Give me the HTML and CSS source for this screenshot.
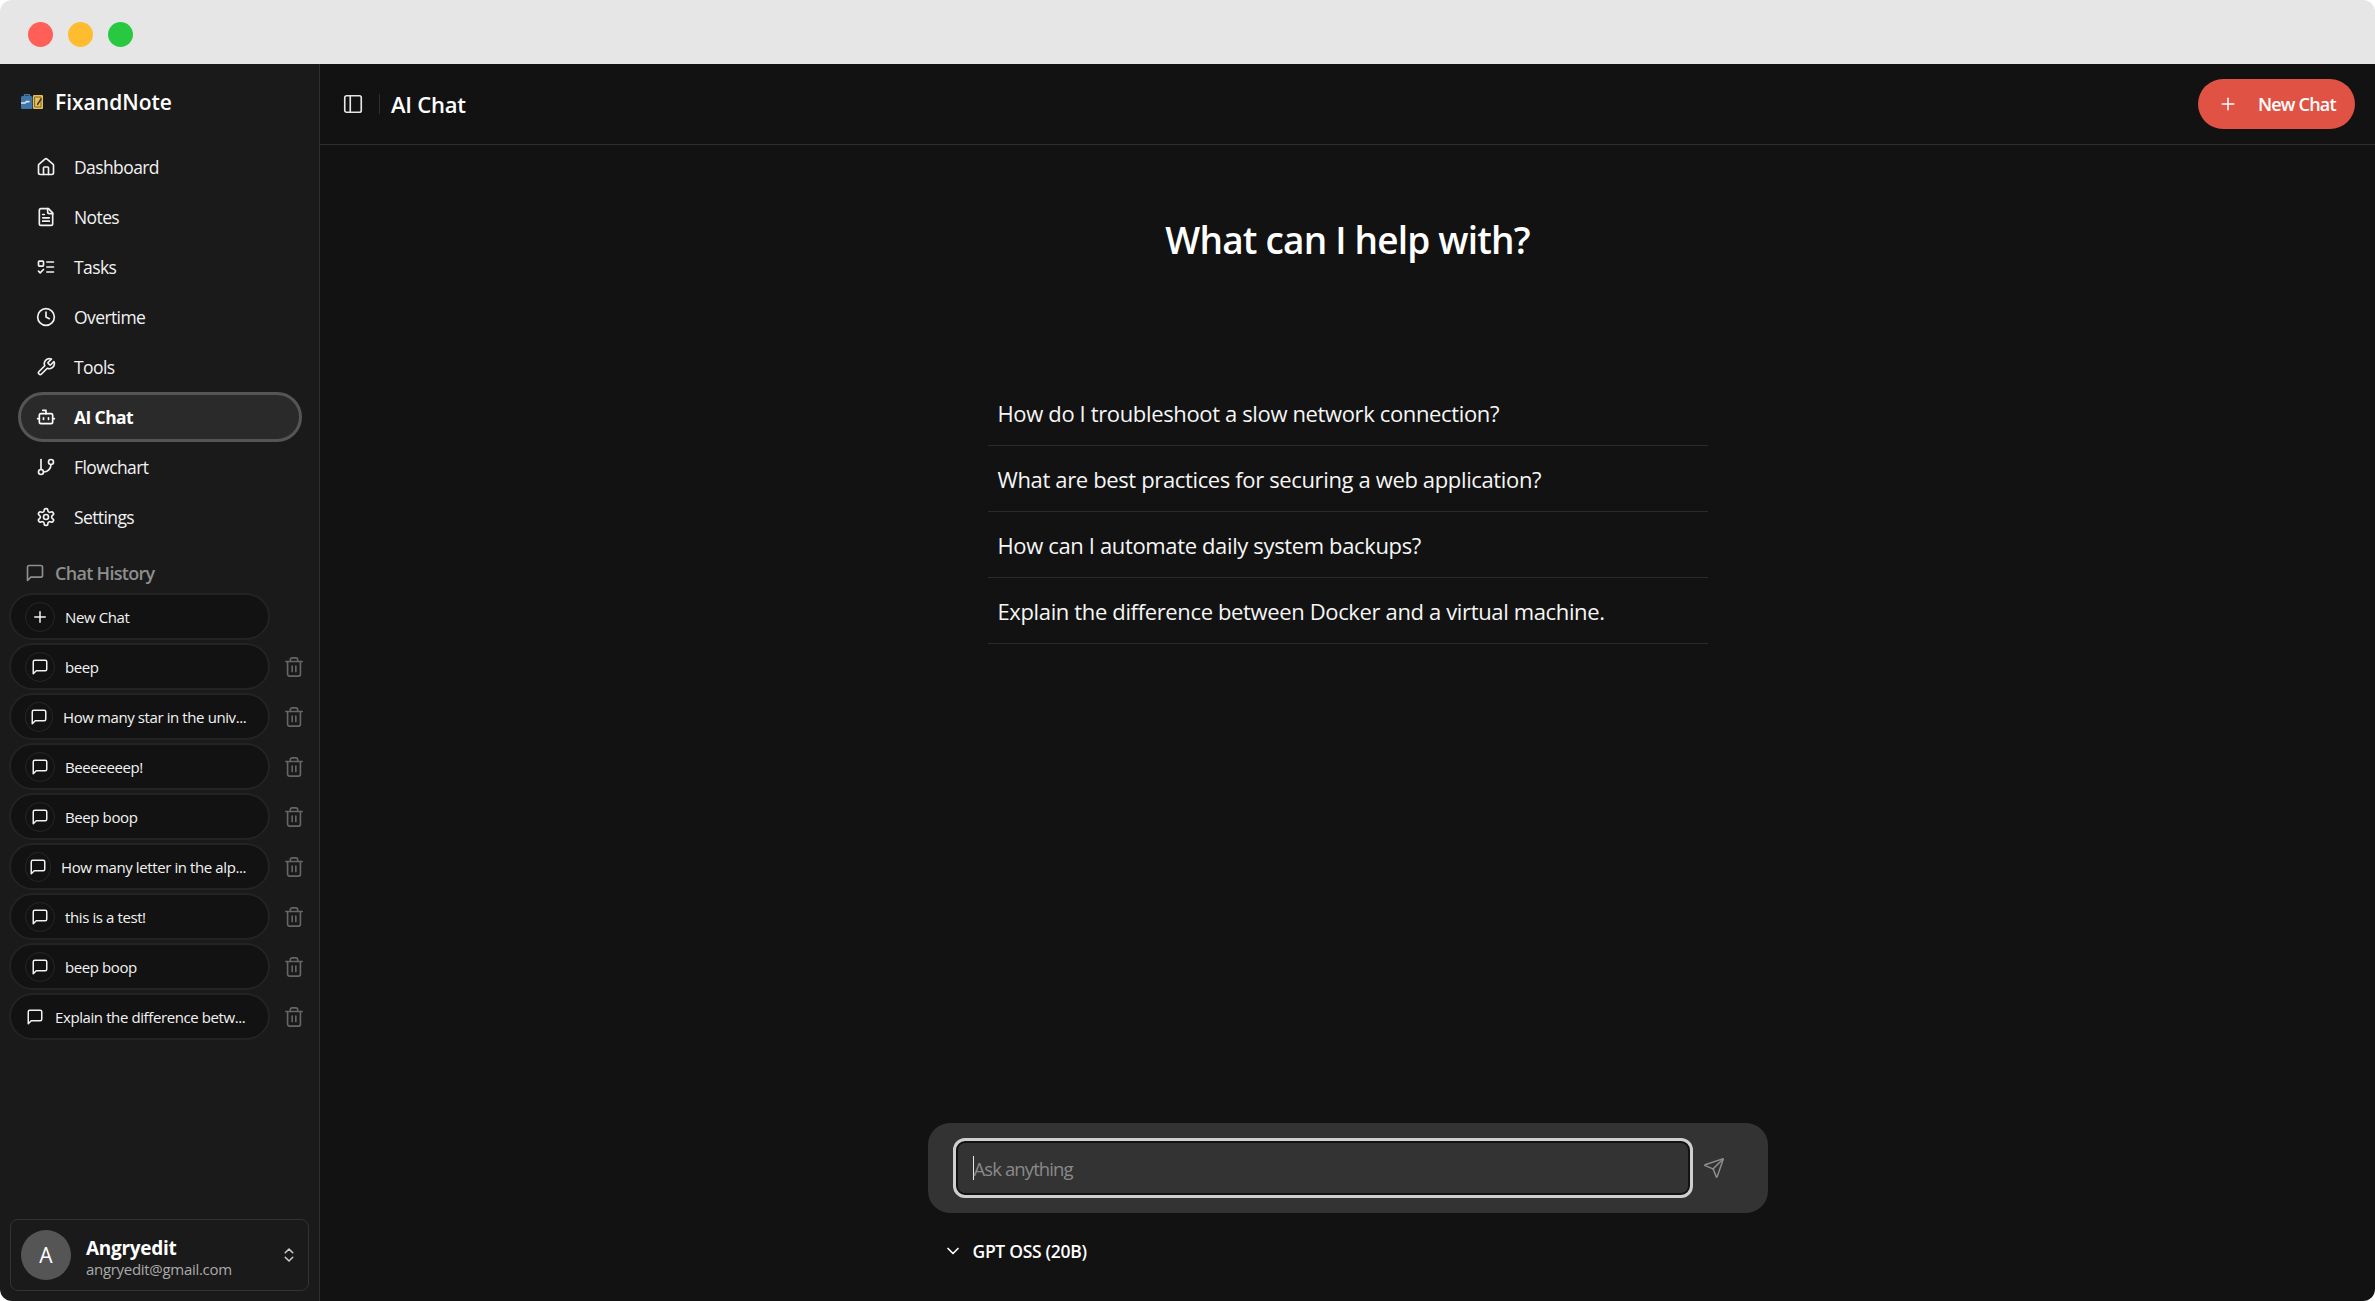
FILE: index.html
```html
<!DOCTYPE html>
<html lang="en">
<head>
<meta charset="utf-8">
<title>FixandNote - AI Chat</title>
<link rel="stylesheet" href="styles.css">
</head>
<body>
<svg class="sprite" aria-hidden="true">
  <symbol id="i-home" viewBox="0 0 24 24"><path d="M15 21v-8a1 1 0 0 0-1-1h-4a1 1 0 0 0-1 1v8"/><path d="M3 10a2 2 0 0 1 .709-1.528l7-5.999a2 2 0 0 1 2.582 0l7 5.999A2 2 0 0 1 21 10v9a2 2 0 0 1-2 2H5a2 2 0 0 1-2-2z"/></symbol>
  <symbol id="i-file" viewBox="0 0 24 24"><path d="M15 2H6a2 2 0 0 0-2 2v16a2 2 0 0 0 2 2h12a2 2 0 0 0 2-2V7Z"/><path d="M14 2v4a2 2 0 0 0 2 2h4"/><path d="M10 9H8"/><path d="M16 13H8"/><path d="M16 17H8"/></symbol>
  <symbol id="i-tasks" viewBox="0 0 24 24"><rect x="3" y="5" width="6" height="6" rx="1"/><path d="m3 17 2 2 4-4"/><path d="M13 6h8"/><path d="M13 12h8"/><path d="M13 18h8"/></symbol>
  <symbol id="i-clock" viewBox="0 0 24 24"><circle cx="12" cy="12" r="10"/><path d="M12 6v6l4 2"/></symbol>
  <symbol id="i-wrench" viewBox="0 0 24 24"><path d="M14.7 6.3a1 1 0 0 0 0 1.4l1.6 1.6a1 1 0 0 0 1.4 0l3.77-3.77a6 6 0 0 1-7.94 7.94l-6.91 6.91a2.12 2.12 0 0 1-3-3l6.91-6.91a6 6 0 0 1 7.94-7.94l-3.76 3.76z"/></symbol>
  <symbol id="i-bot" viewBox="0 0 24 24"><path d="M12 8V4H8"/><rect width="16" height="12" x="4" y="8" rx="2"/><path d="M2 14h2"/><path d="M20 14h2"/><path d="M15 13v2"/><path d="M9 13v2"/></symbol>
  <symbol id="i-branch" viewBox="0 0 24 24"><path d="M6 3v12"/><circle cx="18" cy="6" r="3"/><circle cx="6" cy="18" r="3"/><path d="M18 9a9 9 0 0 1-9 9"/></symbol>
  <symbol id="i-gear" viewBox="0 0 24 24"><path d="M12.22 2h-.44a2 2 0 0 0-2 2v.18a2 2 0 0 1-1 1.73l-.43.25a2 2 0 0 1-2 0l-.15-.08a2 2 0 0 0-2.73.73l-.22.38a2 2 0 0 0 .73 2.73l.15.1a2 2 0 0 1 1 1.72v.51a2 2 0 0 1-1 1.74l-.15.09a2 2 0 0 0-.73 2.73l.22.38a2 2 0 0 0 2.73.73l.15-.08a2 2 0 0 1 2 0l.43.25a2 2 0 0 1 1 1.73V20a2 2 0 0 0 2 2h.44a2 2 0 0 0 2-2v-.18a2 2 0 0 1 1-1.73l.43-.25a2 2 0 0 1 2 0l.15.08a2 2 0 0 0 2.73-.73l.22-.39a2 2 0 0 0-.73-2.73l-.15-.08a2 2 0 0 1-1-1.74v-.5a2 2 0 0 1 1-1.74l.15-.09a2 2 0 0 0 .73-2.73l-.22-.38a2 2 0 0 0-2.73-.73l-.15.08a2 2 0 0 1-2 0l-.43-.25a2 2 0 0 1-1-1.73V4a2 2 0 0 0-2-2z"/><circle cx="12" cy="12" r="3"/></symbol>
  <symbol id="i-msg" viewBox="0 0 24 24"><path d="M21 15a2 2 0 0 1-2 2H7l-4 4V5a2 2 0 0 1 2-2h14a2 2 0 0 1 2 2z"/></symbol>
  <symbol id="i-plus" viewBox="0 0 24 24"><path d="M5 12h14"/><path d="M12 5v14"/></symbol>
  <symbol id="i-trash" viewBox="0 0 24 24"><path d="M3 6h18"/><path d="M19 6v14c0 1-1 2-2 2H7c-1 0-2-1-2-2V6"/><path d="M8 6V4c0-1 1-2 2-2h4c1 0 2 1 2 2v2"/><path d="M10 11v6"/><path d="M14 11v6"/></symbol>
  <symbol id="i-updown" viewBox="0 0 24 24"><path d="m7 15 5 5 5-5"/><path d="m7 9 5-5 5 5"/></symbol>
  <symbol id="i-panel" viewBox="0 0 24 24"><rect width="18" height="18" x="3" y="3" rx="2"/><path d="M9 3v18"/></symbol>
  <symbol id="i-send" viewBox="0 0 24 24"><path d="M14.536 21.686a.5.5 0 0 0 .937-.024l6.5-19a.496.496 0 0 0-.635-.635l-19 6.5a.5.5 0 0 0-.024.937l7.93 3.18a2 2 0 0 1 1.112 1.11z"/><path d="m21.854 2.147-10.94 10.939"/></symbol>
  <symbol id="i-down" viewBox="0 0 24 24"><path d="m6 9 6 6 6-6"/></symbol>
</svg>

<div class="window">
  <div class="titlebar">
    <span class="dot dot-red"></span>
    <span class="dot dot-yellow"></span>
    <span class="dot dot-green"></span>
  </div>
  <div class="app">
    <aside class="sidebar">
      <div class="brand">
        <svg class="logo" viewBox="0 0 22 16" aria-hidden="true">
          <rect x="0" y="2" width="11.5" height="13" rx="1.5" fill="#3f76a8"/>
          <path d="M3.5 2V.8h5V2" fill="none" stroke="#3f76a8" stroke-width="1.4"/>
          <path d="M0.5 9h3.5l1.4-1.4h2.6" fill="none" stroke="#dfe6ee" stroke-width="1.6"/>
          <rect x="12" y="1" width="10" height="14" rx="1" fill="#e8bf55"/>
          <rect x="14" y="3" width="6" height="10" fill="none" stroke="#7a6426" stroke-width="1"/>
          <path d="M20 5l-3.5 5.5" stroke="#3d3413" stroke-width="1.4"/>
        </svg>
        <span class="brand-name">FixandNote</span>
      </div>
      <nav class="nav">
        <a class="nav-link"><svg class="icon"><use href="#i-home"/></svg><span>Dashboard</span></a>
        <a class="nav-link"><svg class="icon"><use href="#i-file"/></svg><span>Notes</span></a>
        <a class="nav-link"><svg class="icon"><use href="#i-tasks"/></svg><span>Tasks</span></a>
        <a class="nav-link"><svg class="icon"><use href="#i-clock"/></svg><span>Overtime</span></a>
        <a class="nav-link"><svg class="icon"><use href="#i-wrench"/></svg><span>Tools</span></a>
        <a class="nav-link is-active"><svg class="icon"><use href="#i-bot"/></svg><span>AI Chat</span></a>
        <a class="nav-link"><svg class="icon"><use href="#i-branch"/></svg><span>Flowchart</span></a>
        <a class="nav-link"><svg class="icon"><use href="#i-gear"/></svg><span>Settings</span></a>
      </nav>
      <div class="history-label"><svg class="icon"><use href="#i-msg"/></svg><span>Chat History</span></div>
      <ul class="history">
        <li class="history-row"><div class="chat-pill"><span class="chat-icon"><svg class="icon-sm"><use href="#i-plus"/></svg></span><span class="chat-text">New Chat</span></div></li>
        <li class="history-row"><div class="chat-pill"><span class="chat-icon"><svg class="icon-sm"><use href="#i-msg"/></svg></span><span class="chat-text">beep</span></div><svg class="trash"><use href="#i-trash"/></svg></li>
        <li class="history-row"><div class="chat-pill"><span class="chat-icon squeeze-1"><svg class="icon-sm"><use href="#i-msg"/></svg></span><span class="chat-text">How many star in the univ...</span></div><svg class="trash"><use href="#i-trash"/></svg></li>
        <li class="history-row"><div class="chat-pill"><span class="chat-icon"><svg class="icon-sm"><use href="#i-msg"/></svg></span><span class="chat-text">Beeeeeeep!</span></div><svg class="trash"><use href="#i-trash"/></svg></li>
        <li class="history-row"><div class="chat-pill"><span class="chat-icon"><svg class="icon-sm"><use href="#i-msg"/></svg></span><span class="chat-text">Beep boop</span></div><svg class="trash"><use href="#i-trash"/></svg></li>
        <li class="history-row"><div class="chat-pill"><span class="chat-icon squeeze-2"><svg class="icon-sm"><use href="#i-msg"/></svg></span><span class="chat-text">How many letter in the alp...</span></div><svg class="trash"><use href="#i-trash"/></svg></li>
        <li class="history-row"><div class="chat-pill"><span class="chat-icon"><svg class="icon-sm"><use href="#i-msg"/></svg></span><span class="chat-text">this is a test!</span></div><svg class="trash"><use href="#i-trash"/></svg></li>
        <li class="history-row"><div class="chat-pill"><span class="chat-icon"><svg class="icon-sm"><use href="#i-msg"/></svg></span><span class="chat-text">beep boop</span></div><svg class="trash"><use href="#i-trash"/></svg></li>
        <li class="history-row"><div class="chat-pill"><span class="chat-icon squeeze-3"><svg class="icon-sm"><use href="#i-msg"/></svg></span><span class="chat-text">Explain the difference betw...</span></div><svg class="trash"><use href="#i-trash"/></svg></li>
      </ul>
      <div class="account">
        <span class="avatar">A</span>
        <div class="account-info">
          <div class="account-name">Angryedit</div>
          <div class="account-mail">angryedit@gmail.com</div>
        </div>
        <svg class="updown"><use href="#i-updown"/></svg>
      </div>
    </aside>
    <main class="main">
      <header class="topbar">
        <svg class="panel-icon"><use href="#i-panel"/></svg>
        <span class="topbar-sep"></span>
        <h1 class="topbar-title">AI Chat</h1>
        <button class="new-chat"><svg class="new-chat-icon"><use href="#i-plus"/></svg><span>New Chat</span></button>
      </header>
      <section class="welcome">
        <h2 class="welcome-title">What can I help with?</h2>
        <ul class="suggestions">
          <li class="suggestion">How do I troubleshoot a slow network connection?</li>
          <li class="suggestion">What are best practices for securing a web application?</li>
          <li class="suggestion">How can I automate daily system backups?</li>
          <li class="suggestion">Explain the difference between Docker and a virtual machine.</li>
        </ul>
      </section>
      <section class="composer">
        <div class="composer-panel">
          <div class="composer-input"><span class="caret"></span><span class="placeholder">Ask anything</span></div>
          <svg class="send"><use href="#i-send"/></svg>
        </div>
        <div class="model"><svg class="model-chevron"><use href="#i-down"/></svg><span>GPT OSS (20B)</span></div>
      </section>
    </main>
  </div>
</div>
</body>
</html>
```

FILE: styles.css
```css
* { box-sizing: border-box; }
html, body { margin: 0; height: 100%; }
body {
  background: #fff;
  font-family: "Open Sans", "Noto Sans", sans-serif;
  color: #fff;
  overflow: hidden;
}
.sprite { display: none; }
svg { fill: none; stroke: currentColor; stroke-linecap: round; stroke-linejoin: round; stroke-width: 2; display: block; flex: none; }

.window { height: 1301px; display: flex; flex-direction: column; border-radius: 12px; overflow: hidden; }
.titlebar { height: 64px; background: #e6e6e6; display: flex; align-items: center; gap: 15px; padding: 4px 0 0 28px; flex: none; }
.dot { width: 25px; height: 25px; border-radius: 50%; }
.dot-red { background: #ff5f57; }
.dot-yellow { background: #febc2e; }
.dot-green { background: #28c840; }

.app { flex: 1; display: flex; min-height: 0; }

/* sidebar */
.sidebar { width: 320px; background: #1a1a1a; border-right: 1px solid #2e2e2e; display: flex; flex-direction: column; flex: none; }
.brand { height: 78px; display: flex; align-items: center; gap: 12px; padding: 0 0 2px 21px; }
.logo { width: 22px; height: 16px; stroke: none; }
.brand-name { font-size: 21px; font-weight: 600; letter-spacing: 0; }
.nav { display: flex; flex-direction: column; padding: 0 17px 0 18px; }
.nav-link { height: 50px; display: flex; align-items: center; gap: 18px; padding-left: 16px; font-size: 17.5px; letter-spacing: -0.6px; border-radius: 25px; border: 2px solid transparent; color: #f2f2f2; }
.icon { width: 20px; height: 20px; stroke-width: 2; }
.is-active { background: #2a2a2a; border: 3px solid #555; padding-left: 15px; font-weight: 700; color: #fff; }
.history-label { display: flex; align-items: center; gap: 10px; padding: 0 0 0 25px; margin-top: 15px; height: 32px; font-size: 18px; font-weight: 600; letter-spacing: -0.7px; color: #8e8e8e; }
.history-label .icon { width: 20px; height: 20px; }
.history { list-style: none; margin: 4px 0 0; padding: 0 0 0 9px; display: flex; flex-direction: column; gap: 3px; }
.history-row { display: flex; align-items: center; height: 47px; gap: 13px; }
.chat-pill { width: 261px; height: 47px; flex: none; display: flex; align-items: center; gap: 10px; padding-left: 14px; background: #121212; border: 2px solid #232323; border-radius: 24px; font-size: 15px; letter-spacing: -0.4px; color: #f2f2f2; }
.chat-icon { width: 30px; height: 30px; flex: none; display: flex; align-items: center; justify-content: center; border-radius: 50%; border: 1px solid #262626; }
.squeeze-1 { width: 28px; }
.squeeze-2 { width: 26px; }
.squeeze-3 { width: 20px; border-color: transparent; }
.icon-sm { width: 18px; height: 18px; stroke-width: 2; }
.chat-text { white-space: nowrap; }
.trash { width: 22px; height: 22px; color: #666; stroke-width: 1.8; }

.account { margin: auto 10px 10px; height: 72px; border: 1px solid #333; border-radius: 8px; display: flex; align-items: center; gap: 15px; padding: 0 10px; }
.avatar { width: 50px; height: 50px; border-radius: 50%; background: #555; display: flex; align-items: center; justify-content: center; font-size: 21px; flex: none; }
.account-info { flex: 1; min-width: 0; padding-top: 3px; }
.account-name { font-size: 19px; font-weight: 700; line-height: 24px; letter-spacing: -0.3px; }
.account-mail { font-size: 15px; line-height: 18px; color: #aaa; letter-spacing: -0.3px; }
.updown { width: 18px; height: 18px; color: #ccc; stroke-width: 2; }

/* main */
.main { flex: 1; background: #121212; display: flex; flex-direction: column; min-width: 0; }
.topbar { height: 81px; border-bottom: 1px solid #2e2e2e; display: flex; align-items: center; padding: 0 20px 0 22px; flex: none; }
.panel-icon { width: 22px; height: 22px; color: #e6e6e6; stroke-width: 1.8; }
.topbar-sep { width: 1px; height: 20px; background: #2e2e2e; margin: 0 11px 0 15px; }
.topbar-title { margin: 0; font-size: 22px; font-weight: 600; letter-spacing: -0.25px; flex: 1; }
.new-chat { width: 157px; height: 50px; border: 0; border-radius: 25px; background: #e05243; color: #fff; font: 600 18px "Open Sans", sans-serif; letter-spacing: -0.8px; display: flex; align-items: center; padding: 0 0 0 20px; gap: 20px; }
.new-chat-icon { width: 20px; height: 20px; stroke-width: 1.8; }

.welcome { flex: 1; display: flex; flex-direction: column; align-items: center; }
.welcome-title { margin: 65px 0 0; font-size: 37px; line-height: 60px; font-weight: 600; letter-spacing: -0.8px; }
.suggestions { list-style: none; margin: 110px 0 0; padding: 0; width: 720px; }
.suggestion { height: 66px; border-bottom: 1px solid #2a2a2a; padding: 0 10px; display: flex; align-items: center; font-size: 22px; letter-spacing: -0.36px; color: #f6f6f6; }

.composer { width: 840px; align-self: center; padding-bottom: 37px; flex: none; }
.composer-panel { height: 90px; background: #333; border-radius: 22px; display: flex; align-items: center; padding: 0 27px 0 25px; gap: 10px; }
.composer-input { width: 740px; height: 60px; flex: none; border: 3px solid #cfcfcf; border-radius: 12px; background: #333; box-shadow: inset 0 0 0 2px #121212; display: flex; align-items: center; padding-left: 17px; font-size: 18.5px; letter-spacing: -0.9px; color: #8a8a8a; }
.caret { width: 1px; height: 24px; background: #e6e6e6; }
.send { width: 22px; height: 22px; color: #8e8e8e; stroke-width: 1.6; }
.model { display: flex; align-items: center; gap: 10px; margin-top: 25px; padding-left: 15px; height: 26px; font-size: 17.5px; font-weight: 600; letter-spacing: -0.3px; }
.model-chevron { width: 20px; height: 20px; }
```
